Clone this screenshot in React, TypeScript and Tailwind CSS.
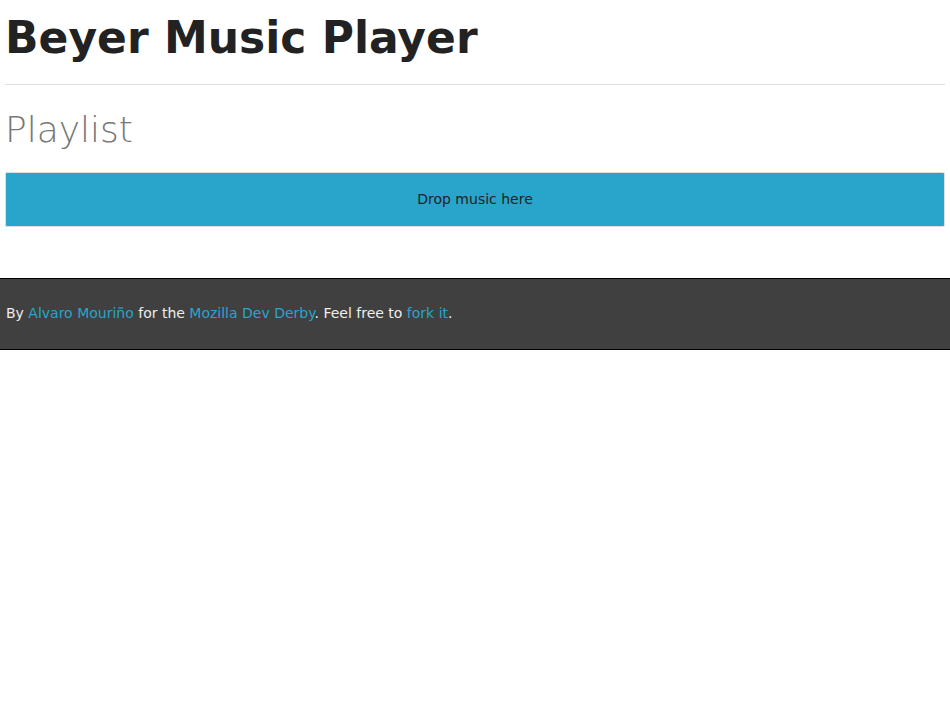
export default function App() {
    return (
        <div className="min-h-screen bg-white font-['DejaVu_Sans',sans-serif] text-sm text-[#222]">
            <header className="px-[5px]">
                <h1 className="pt-[10px] pb-[18px] text-[44px] font-bold leading-[56px] text-[#222]">
                    Beyer Music Player
                </h1>
                <hr className="border-t border-[#ddd]" />
            </header>
            <main className="px-[5px] pt-[21px]">
                <h2 className="text-[36px] font-extralight leading-[48px] text-[#777]">Playlist</h2>
                <div className="mt-[18px] flex h-[55px] items-center justify-center rounded-[2px] border border-[#ddd] bg-[#29a5cb] pb-[2px] text-[#222]">
                    Drop music here
                </div>
            </main>
            <footer className="mt-[51px] flex h-[72px] items-center border-y border-black bg-[#404040] pb-[2px] pl-[6px] pr-[5px] text-[#eee]">
                <p>
                    By <a href="#" className="text-[#29a5cb]">Alvaro Mouriño</a> for the{' '}
                    <a href="#" className="text-[#29a5cb]">Mozilla Dev Derby</a>. Feel free to{' '}
                    <a href="#" className="text-[#29a5cb]">fork it</a>.
                </p>
            </footer>
        </div>
    )
}
